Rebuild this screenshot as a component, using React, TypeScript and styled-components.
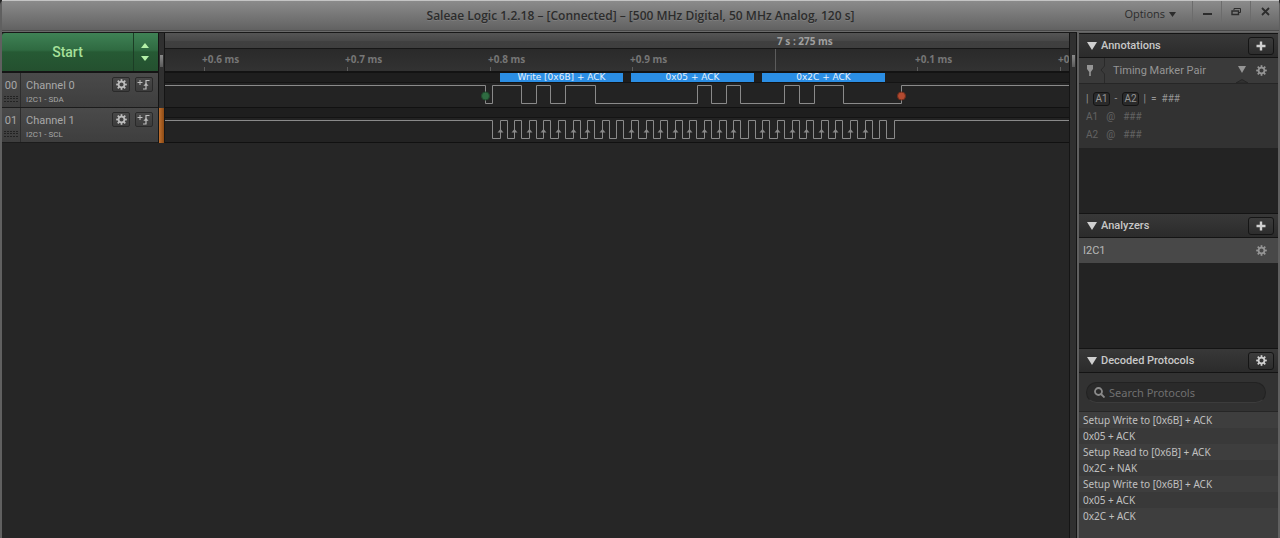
import React from "react";
import styled, { createGlobalStyle } from "styled-components";

const roboto = `Roboto, "Liberation Sans", sans-serif`;
const humanist = `"Noto Sans", "Open Sans", sans-serif`;
const openSans = `"Open Sans", "Noto Sans", sans-serif`;
const wide = `"DejaVu Sans", "Noto Sans", sans-serif`;

const Global = createGlobalStyle`
  * { box-sizing: border-box; }
  body { margin: 0; background: #262626; color: #a8a8a8; font: 11px/16px ${roboto}; }
  button, input { font: inherit; color: inherit; margin: 0; padding: 0; border: 0; background: none; }
  h1, h2, p, ul { margin: 0; padding: 0; font-size: inherit; font-weight: inherit; }
  ul { list-style: none; }
  svg { display: block; }
`;

const Window = styled.div`
  min-height: 100vh;
  display: flex;
  flex-direction: column;
  border: 0 solid #606060;
  border-width: 0 1px 0 2px;
  border-radius: 5px 5px 0 0;
  background: #606060;
`;

const TitleBar = styled.header`
  height: 32px;
  display: grid;
  grid-template-columns: 1fr auto 1fr;
  align-items: center;
  background: linear-gradient(#8b8b8b, #606060);
  border-top: 1px solid #c4c4c4;
  border-bottom: 1px solid #6a6a6a;
  box-shadow: inset 0 -1px #4a4a4a;
  color: #2c2c2c;
`;

const Title = styled.h1`
  grid-column: 2;
  font: 600 12px/16px ${openSans};
  text-shadow: 0 1px #9a9a9a55;
`;

const WindowTools = styled.div`
  display: flex;
  justify-content: flex-end;
  align-self: start;
`;

const OptionsButton = styled.button`
  display: flex;
  align-items: center;
  gap: 4px;
  margin-right: 16px;
  padding-top: 5px;
  font: 11px/16px ${openSans};
`;

const WindowButton = styled.button`
  width: 29px;
  height: 21px;
  display: grid;
  place-items: center;
  border-left: 1px solid #6c6c6c;
`;

const Body = styled.main`
  flex: 1;
  display: flex;
  background: #262626;
`;

const Capture = styled.section`
  flex: 1;
  min-width: 0;
  display: grid;
  grid-template-columns: 156px 7px minmax(0, 1fr) 8px;
  grid-template-rows: 40px 35px 35px 1fr;
  border-top: 1px solid #181818;
`;

const StartGroup = styled.div`
  display: flex;
  border-bottom: 2px solid #151515;
  color: #a6e09a;
`;

const green = `linear-gradient(#3f8255, #2f6a41 45%, #265a34 50%, #24502f)`;

const StartButton = styled.button`
  flex: 1;
  font: 500 14px/20px ${roboto};
  background: ${green};
  border-radius: 3px 0 0 0;
`;

const Stepper = styled.div`
  width: 25px;
  display: flex;
  flex-direction: column;
  border-left: 1px solid #1c3d25;
  padding-right: 2px;
  background: ${green};
`;

const StepButton = styled.button<{ $down?: boolean }>`
  flex: 1;
  display: flex;
  justify-content: center;
  align-items: ${(p) => (p.$down ? "flex-start" : "flex-end")};
  padding: 4px 0;
  color: #b4f0a8;
`;

const Gutter = styled.div<{ $orange?: boolean }>`
  display: flex;
  align-items: flex-end;
  justify-content: center;
  border: solid #151515;
  border-width: 0 1px;
  background: ${(p) =>
    p.$orange ? "linear-gradient(90deg, #c0702f, #8c4a14)" : "#303030"};
`;

const Grip = styled.span`
  width: 3px;
  height: 12px;
  margin-bottom: 6px;
  background: linear-gradient(#8a8a8a, #5a5a5a);
`;

const Ruler = styled.div`
  display: grid;
  grid-template-rows: 16px 24px;
  border-bottom: 2px solid #131313;
  font: 700 10px/12px ${humanist};
  overflow: hidden;
`;

const Coarse = styled.div`
  display: grid;
  grid-template-columns: 610fr 294fr;
  background: linear-gradient(#555, #484848 50%, #404040 55%, #3e3e3e);
  border-bottom: 1px solid #171717;
`;

const CoarseLabel = styled.span`
  grid-column: 2;
  padding: 2px 0 0 2px;
  color: #a0a0a0;
`;

const Fine = styled.div`
  display: grid;
  grid-template-columns: 37fr 143fr 143fr 142fr 143fr 142fr 143fr 11fr;
  background: linear-gradient(#2a2a2a, #333);
  color: #767676;
`;

const Tick = styled.div<{ $tall?: boolean }>`
  min-width: 0;
  display: flex;
  flex-direction: column;
  justify-content: space-between;
  padding-top: ${(p) => (p.$tall ? "0" : "4px")};
  white-space: nowrap;
  &::after {
    content: "";
    width: 1px;
    height: ${(p) => (p.$tall ? "22px" : "6px")};
    margin-left: 2px;
    background: #5c5c5c;
  }
`;

const Channel = styled.div`
  display: flex;
  background: linear-gradient(#4a4a4a, #3e3e3e);
  border-bottom: 1px solid #1c1c1c;
`;

const ChannelIndex = styled.div`
  width: 19px;
  display: flex;
  flex-direction: column;
  align-items: center;
  gap: 1px;
  padding: 5px 0 0;
  border-right: 1px solid #2c2c2c;
`;

const ChannelName = styled.div`
  flex: 1;
  padding: 5px 0 0 5px;
`;

const ChannelLabel = styled.p`
  font: 11px/16px ${roboto};
`;

const ChannelRole = styled.p`
  font: 8px/12px ${roboto};
`;

const ChannelTools = styled.div`
  display: flex;
  gap: 5px;
  padding: 4px 5px 0 0;
`;

const SmallButton = styled.button`
  width: 18px;
  height: 15px;
  display: grid;
  place-items: center;
  border: 1px solid #2a2a2a;
  border-radius: 2px;
  background: linear-gradient(#484848, #3c3c3c);
  color: #bdbdbd;
`;

const Track = styled.div`
  display: flex;
  flex-direction: column;
  background: #232323;
  border-bottom: 1px solid #111;
`;

const Decodes = styled.div`
  height: 10px;
  display: grid;
  grid-template-columns: 335fr 123fr 8fr 123fr 8fr 123fr 184fr;
  background: #1e1e1e;
  border-bottom: 1px solid #141414;
`;

const Decode = styled.span<{ $col: number }>`
  grid-column: ${(p) => p.$col};
  grid-row: 1;
  background: #2b8ee4;
  color: #e4f1fd;
  font: 9px/9px ${wide};
  text-align: center;
  white-space: nowrap;
`;

const Wave = styled.svg`
  width: 100%;
  height: 24px;
  fill: none;
  stroke: #8a8a8a;
`;

const Sidebar = styled.aside`
  width: 202px;
  display: flex;
  flex-direction: column;
  border: solid #606060;
  border-width: 1px 1px 0 2px;
  background: #232323;
`;

const PanelHead = styled.header`
  height: 25px;
  display: flex;
  align-items: center;
  gap: 4px;
  padding: 0 4px 0 8px;
  background: linear-gradient(#383838, #2b2b2b);
  border: solid #141414;
  border-width: 1px 0;
  color: #d0d0d0;
`;

const PanelTitle = styled.h2`
  flex: 1;
  font: 500 11px/16px ${roboto};
  color: #c8c8c8;
`;

const PanelButton = styled.button`
  width: 26px;
  height: 18px;
  display: grid;
  place-items: center;
  border: 1px solid #151515;
  border-radius: 3px;
  background: linear-gradient(#3c3c3c, #2d2d2d);
`;

const PanelSpace = styled.div<{ $height: number }>`
  height: ${(p) => p.$height}px;
`;

const MarkerHead = styled.div`
  height: 25px;
  display: flex;
  align-items: center;
  padding: 0 11px 0 7px;
  background: #3a3a3a;
  color: #959595;
`;

const MarkerName = styled.span`
  flex: 1;
  padding-left: 8px;
`;

const IconButton = styled.button`
  margin-left: 8px;
  color: #959595;
`;

const Markers = styled.div`
  height: 65px;
  padding: 6px 7px 0;
  border-top: 1px solid #262626;
  background: #323232;
`;

const MarkerRow = styled.p<{ $dim?: boolean }>`
  height: 18px;
  display: flex;
  align-items: center;
  gap: ${(p) => (p.$dim ? "8px" : "5px")};
  font-size: 10px;
  color: ${(p) => (p.$dim ? "#626262" : "#969696")};
`;

const MarkerKey = styled.span`
  padding: 0 1px;
  border: 1px solid #141414;
  border-radius: 3px;
  background: #2a2a2a;
  line-height: 12px;
`;

const Analyzer = styled.div`
  height: 25px;
  display: flex;
  align-items: center;
  justify-content: space-between;
  padding: 0 11px 0 4px;
  background: #484848;
  color: #b8b8b8;
`;

const SearchArea = styled.div`
  height: 39px;
  padding: 9px 12px 0 7px;
  background: #323232;
  border-bottom: 1px solid #262626;
`;

const SearchField = styled.label`
  height: 21px;
  display: flex;
  align-items: center;
  gap: 4px;
  padding: 0 7px;
  border-radius: 11px;
  border: 1px solid #222;
  border-bottom-color: #3c3c3c;
  background: #2a2a2a;
  color: #8a8a8a;
`;

const SearchInput = styled.input`
  flex: 1;
  min-width: 0;
  font: 11px/16px ${humanist};
  outline: 0;
  &::placeholder { color: #707070; opacity: 1; }
`;

const Results = styled.ul`
  flex: 1;
  background: #3e3e3e;
  font: 10px/16px ${humanist};
  color: #c0c0c0;
`;

const Result = styled.li`
  padding-left: 4px;
  &:nth-child(even) { background: #393939; }
`;

const Gear = ({ size = 11 }: { size?: number }) => (
  <svg width={size} height={size} viewBox="0 0 12 12" fill="none" stroke="currentColor">
    <circle cx="6" cy="6" r="3.2" strokeWidth="1.9" />
    {[0, 45, 90, 135, 180, 225, 270, 315].map((a) => (
      <path key={a} d="M6 0.2V2.4" strokeWidth="1.9" transform={`rotate(${a} 6 6)`} />
    ))}
  </svg>
);

const Triangle = ({ w, h, up }: { w: number; h: number; up?: boolean }) => (
  <svg width={w} height={h} viewBox="0 0 10 10" preserveAspectRatio="none" fill="currentColor">
    <path d={up ? "M5 0L10 10H0Z" : "M0 0H10L5 10Z"} />
  </svg>
);

const Plus = () => (
  <svg width="10" height="10" viewBox="0 0 10 10" stroke="currentColor" strokeWidth="2.4">
    <path d="M5 0.5V9.5M0.5 5H9.5" />
  </svg>
);

const TriggerIcon = () => (
  <svg width="14" height="11" viewBox="0 0 14 11" fill="none" stroke="currentColor">
    <path d="M0.5 3.5H5.5M3 1V6" />
    <path d="M6 10H9V1.5H12.5" strokeWidth="1.2" />
    <path d="M6.4 6.8L9 4L11.6 6.8Z" fill="currentColor" stroke="none" />
  </svg>
);

const DragDots = () => (
  <svg width="14" height="8" viewBox="0 0 14 8" fill="#232323">
    {[0, 3, 6, 9, 12].map((x) =>
      [1, 3, 6].map((y) => <rect key={`${x}-${y}`} x={x} y={y} width="2" height="1" />)
    )}
  </svg>
);

const sdaEdges = [320, 327, 356, 371, 385, 400, 430, 532, 546, 561, 575, 619, 634, 649, 678, 736];
const clockRises = Array.from({ length: 27 }, (_, i) => Math.round(334.5 + i * 14.6));
const sclEdges = [327, ...clockRises.flatMap((x) => [x, x + 7]), 729];

const HIGH = 2.5;
const LOW = 20.5;

function edgePath(edges: number[]) {
  let d = `M0 ${HIGH}`;
  edges.forEach((x, i) => {
    d += `H${x + 0.5}V${i % 2 === 0 ? LOW : HIGH}`;
  });
  return d + "H904";
}

const channels = [
  { index: "00", name: "Channel 0", role: "I2C1 - SDA" },
  { index: "01", name: "Channel 1", role: "I2C1 - SCL" },
];
const ticks = ["+0.6 ms", "+0.7 ms", "+0.8 ms", "+0.9 ms", "", "+0.1 ms", "+0"];
const decodes = ["Write [0x6B] + ACK", "0x05 + ACK", "0x2C + ACK"];
const results = [
  "Setup Write to [0x6B] + ACK",
  "0x05 + ACK",
  "Setup Read to [0x6B] + ACK",
  "0x2C + NAK",
  "Setup Write to [0x6B] + ACK",
  "0x05 + ACK",
  "0x2C + ACK",
];

export default function App() {
  return (
    <>
      <Global />
      <Window>
        <TitleBar>
          <Title>Saleae Logic 1.2.18 – [Connected] – [500 MHz Digital, 50 MHz Analog, 120 s]</Title>
          <WindowTools>
            <OptionsButton>
              Options <Triangle w={7} h={5} />
            </OptionsButton>
            <WindowButton aria-label="Minimize">
              <svg width="9" height="9" stroke="currentColor" strokeWidth="2"><path d="M0 7H9" /></svg>
            </WindowButton>
            <WindowButton aria-label="Restore">
              <svg width="11" height="9" fill="none" stroke="currentColor">
                <path d="M3 3V1.5H9.5V5.5H8" />
                <path d="M1 4H7.5V7.5H1Z" strokeWidth="1.4" />
              </svg>
            </WindowButton>
            <WindowButton aria-label="Close">
              <svg width="9" height="9" stroke="currentColor" strokeWidth="1.8"><path d="M1 1L8 8M8 1L1 8" /></svg>
            </WindowButton>
          </WindowTools>
        </TitleBar>
        <Body>
          <Capture>
            <StartGroup>
              <StartButton>Start</StartButton>
              <Stepper>
                <StepButton aria-label="Increase"><Triangle w={8} h={5} up /></StepButton>
                <StepButton aria-label="Decrease" $down><Triangle w={8} h={5} /></StepButton>
              </Stepper>
            </StartGroup>
            <Gutter><Grip /></Gutter>
            <Ruler>
              <Coarse><CoarseLabel>7 s : 275 ms</CoarseLabel></Coarse>
              <Fine>
                <span />
                {ticks.map((t, i) => (
                  <Tick key={i} $tall={!t}>{t}</Tick>
                ))}
              </Fine>
            </Ruler>
            <Gutter><Grip /></Gutter>
            {channels.map((c, i) => (
              <React.Fragment key={c.index}>
                <Channel>
                  <ChannelIndex>{c.index}<DragDots /></ChannelIndex>
                  <ChannelName>
                    <ChannelLabel>{c.name}</ChannelLabel>
                    <ChannelRole>{c.role}</ChannelRole>
                  </ChannelName>
                  <ChannelTools>
                    <SmallButton aria-label={`${c.name} settings`}><Gear /></SmallButton>
                    <SmallButton aria-label={`${c.name} trigger`}><TriggerIcon /></SmallButton>
                  </ChannelTools>
                </Channel>
                <Gutter $orange={i === 1} />
                <Track>
                  <Decodes>
                    {i === 0 && decodes.map((d, n) => <Decode key={d} $col={2 + n * 2}>{d}</Decode>)}
                  </Decodes>
                  <Wave viewBox="0 0 904 24" preserveAspectRatio="none">
                    <path d={edgePath(i === 0 ? sdaEdges : sclEdges)} />
                    {i === 0 ? (
                      <>
                        <circle cx="320.5" cy="13" r="4" fill="#2f6b41" stroke="#1f4a2c" />
                        <circle cx="736.5" cy="13" r="4" fill="#b34a30" stroke="#6e2c1c" />
                      </>
                    ) : (
                      clockRises
                        .filter((_, n) => n % 9 !== 8)
                        .map((x) => (
                          <path key={x} d={`M${x - 2.5} 14.5L${x + 0.5} 11L${x + 3.5} 14.5Z`} fill="#8a8a8a" stroke="none" />
                        ))
                    )}
                  </Wave>
                </Track>
                <Gutter />
              </React.Fragment>
            ))}
            <span />
            <span />
            <span />
            <Gutter />
          </Capture>
          <Sidebar>
            <PanelHead>
              <Triangle w={10} h={8} />
              <PanelTitle>Annotations</PanelTitle>
              <PanelButton aria-label="Add annotation"><Plus /></PanelButton>
            </PanelHead>
            <MarkerHead>
              <svg width="8" height="11" fill="currentColor"><path d="M1 0H7V4L4.8 7V11H3.2V7L1 4Z" /></svg>
              <svg width="11" height="25" fill="none" stroke="#2a2a2a"><path d="M10.5 0V8L7 12L10.5 16V25" /></svg>
              <MarkerName>Timing Marker Pair</MarkerName>
              <svg width="12" height="25" fill="currentColor">
                <path d="M2 8H10L6 15Z" />
                <path d="M0 25L6 21.5L12 25Z" fill="#323232" stroke="#262626" />
              </svg>
              <IconButton aria-label="Marker settings"><Gear /></IconButton>
            </MarkerHead>
            <Markers>
              <MarkerRow>
                <span>|</span><MarkerKey>A1</MarkerKey><span>-</span><MarkerKey>A2</MarkerKey>
                <span>|</span><span>=</span><span>###</span>
              </MarkerRow>
              <MarkerRow $dim><span>A1</span><span>@</span><span>###</span></MarkerRow>
              <MarkerRow $dim><span>A2</span><span>@</span><span>###</span></MarkerRow>
            </Markers>
            <PanelSpace $height={65} />
            <PanelHead>
              <Triangle w={10} h={8} />
              <PanelTitle>Analyzers</PanelTitle>
              <PanelButton aria-label="Add analyzer"><Plus /></PanelButton>
            </PanelHead>
            <Analyzer>
              I2C1
              <IconButton aria-label="I2C1 settings"><Gear /></IconButton>
            </Analyzer>
            <PanelSpace $height={85} />
            <PanelHead>
              <Triangle w={10} h={8} />
              <PanelTitle>Decoded Protocols</PanelTitle>
              <PanelButton aria-label="Decoder settings"><Gear /></PanelButton>
            </PanelHead>
            <SearchArea>
              <SearchField>
                <svg width="11" height="11" fill="none" stroke="currentColor" strokeWidth="1.8">
                  <circle cx="4.5" cy="4.5" r="3.5" /><path d="M7 7L10.5 10.5" />
                </svg>
                <SearchInput type="search" aria-label="Search Protocols" placeholder="Search Protocols" />
              </SearchField>
            </SearchArea>
            <Results>
              {results.map((r, i) => <Result key={i}>{r}</Result>)}
            </Results>
          </Sidebar>
        </Body>
      </Window>
    </>
  );
}
